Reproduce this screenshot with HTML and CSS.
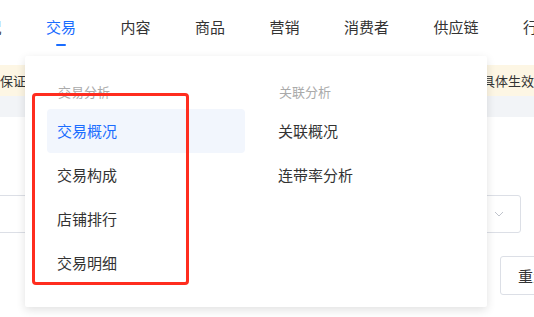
FILE: index.html
```html
<!DOCTYPE html>
<html lang="zh-CN">
<head>
    <meta charset="UTF-8">
    <meta name="viewport" content="width=device-width, initial-scale=1.0">
    <title>交易分析</title>
    <link rel="stylesheet" href="styles.css">
</head>
<body>
    <!-- Navegación superior -->
    <nav class="topnav">
        <a href="#">概况</a>
        <a href="#" class="active">交易</a>
        <a href="#">内容</a>
        <a href="#">商品</a>
        <a href="#">营销</a>
        <a href="#">消费者</a>
        <a href="#">供应链</a>
        <a href="#">行业</a>
    </nav>

    <div class="notice">
        <span>保证金规则调整通知</span>
        <span class="notice-end">具体生效时间</span>
    </div>
    <div class="band"></div>

    <div class="content">
        <div class="select">
            <svg class="chevron" width="10" height="6" viewBox="0 0 10 6">
                <polyline points="1,1 5,5 9,1" fill="none" stroke="#c0c4cc" stroke-width="1"/>
            </svg>
        </div>
        <div class="actions">
            <button class="btn">重置</button>
        </div>
    </div>

    <!-- Menú desplegable -->
    <div class="dropdown">
        <div class="menu-col">
            <div class="menu-title">交易分析</div>
            <a href="#" class="menu-item selected">交易概况</a>
            <a href="#" class="menu-item">交易构成</a>
            <a href="#" class="menu-item">店铺排行</a>
            <a href="#" class="menu-item">交易明细</a>
        </div>
        <div class="menu-col">
            <div class="menu-title">关联分析</div>
            <a href="#" class="menu-item">关联概况</a>
            <a href="#" class="menu-item">连带率分析</a>
        </div>
    </div>

    <!-- Marco de anotación -->
    <div class="highlight-box"></div>
</body>
</html>
```

FILE: styles.css
```css
body {
    margin: 0;
    font-family: "Noto Sans CJK SC", "Noto Sans", sans-serif;
    background: #fff;
    color: #333;
    width: 534px;
    height: 317px;
    overflow: hidden;
    position: relative;
}

.topnav {
    height: 65px;
    display: flex;
    gap: 44.5px;
    margin-left: -28.5px;
    white-space: nowrap;
}

.topnav a {
    display: flex;
    flex-direction: column;
    align-items: center;
    padding-top: 16px;
    font-size: 15px;
    line-height: 22px;
    color: #333;
    text-decoration: none;
    flex-shrink: 0;
}

.topnav a.active {
    color: #1a6dff;
}

.topnav a.active::after {
    content: "";
    display: block;
    width: 10px;
    height: 2px;
    margin-top: 6px;
    border-radius: 1px;
    background: #1a6dff;
}

.notice {
    height: 31px;
    background: #fdf6e4;
    display: flex;
    justify-content: space-between;
    align-items: center;
    font-size: 13px;
    line-height: 31px;
    white-space: nowrap;
    overflow: hidden;
}

.notice-end {
    margin-right: -26px;
}

.band {
    height: 21px;
    background: #f2f4f7;
}

.content {
    padding-top: 78px;
}

.select {
    height: 38px;
    margin-left: -10px;
    margin-right: 13px;
    border: 1px solid #dcdfe6;
    border-radius: 3px;
    box-sizing: border-box;
    display: flex;
    align-items: center;
    justify-content: flex-end;
    padding-right: 16px;
}

.actions {
    display: flex;
    justify-content: flex-end;
    margin-top: 23px;
    margin-right: -36px;
}

.btn {
    height: 39px;
    width: 70px;
    border: 1px solid #dcdfe6;
    border-radius: 3px;
    background: #fff;
    font-family: inherit;
    font-size: 15px;
    color: #333;
    text-align: left;
    padding-left: 17px;
}

/* Menú desplegable sobre el contenido */
.dropdown {
    position: absolute;
    top: 56px;
    left: 25px;
    width: 462px;
    box-sizing: border-box;
    padding: 22px;
    display: grid;
    grid-template-columns: 198px 198px;
    column-gap: 23px;
    background: #fff;
    border-radius: 2px;
    box-shadow: 0 3px 10px rgba(0, 0, 0, 0.12);
}

.menu-col {
    display: flex;
    flex-direction: column;
}

.menu-title {
    height: 31px;
    line-height: 28px;
    padding-left: 11px;
    font-size: 13px;
    color: #aaa;
}

.menu-item {
    height: 44px;
    line-height: 44px;
    padding-left: 10px;
    font-size: 15px;
    color: #333;
    text-decoration: none;
    border-radius: 4px;
}

.menu-item.selected {
    background: #f2f6fd;
    color: #1a6dff;
}

.highlight-box {
    position: absolute;
    top: 93px;
    left: 32px;
    width: 157px;
    height: 192px;
    box-sizing: border-box;
    border: 3px solid #ff2d1f;
    border-radius: 4px;
}
```
